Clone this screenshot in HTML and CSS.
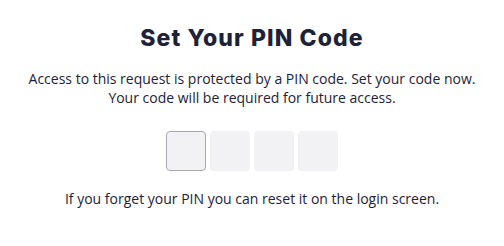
FILE: index.html
```html
<!DOCTYPE html>
<html lang="en">
<head>
  <meta charset="UTF-8" />
  <title>Set Your PIN Code</title>
  <link rel="stylesheet" href="styles.css">
</head>
<body>

<div class="pin-page">
  <h1>Set Your PIN Code</h1>
  <p class="intro">Access to this request is protected by a PIN code. Set your code now.<br>Your code will be required for future access.</p>

  <div class="pin-boxes">
    <input class="pin-box active" type="text" maxlength="1">
    <input class="pin-box" type="text" maxlength="1">
    <input class="pin-box" type="text" maxlength="1">
    <input class="pin-box" type="text" maxlength="1">
  </div>

  <p class="note">If you forget your PIN you can reset it on the login screen.</p>
</div>

</body>
</html>
```

FILE: styles.css
```css
body {
  margin: 0;
  background: #fff;
  font-family: "Open Sans", sans-serif;
  color: #1e2238;
}

.pin-page {
  text-align: center;
  padding-top: 24px;
}

h1 {
  margin: 0;
  font-family: Inter, sans-serif;
  font-weight: 800;
  font-size: 23px;
  line-height: 28px;
  letter-spacing: 1.1px;
}

.intro {
  margin: 18px 0 0;
  font-size: 14px;
  line-height: 18.5px;
}

.pin-boxes {
  display: flex;
  justify-content: center;
  gap: 4px;
  margin-top: 24px;
}

.pin-box {
  width: 40px;
  height: 40px;
  box-sizing: border-box;
  border: 1px solid #f2f2f4;
  border-radius: 4px;
  background: #f2f2f4;
  padding: 0;
  outline: none;
}

.pin-box.active {
  border-color: #a9a7b4;
}

.note {
  margin: 18px 0 0;
  font-size: 14px;
  line-height: 19px;
}
```
